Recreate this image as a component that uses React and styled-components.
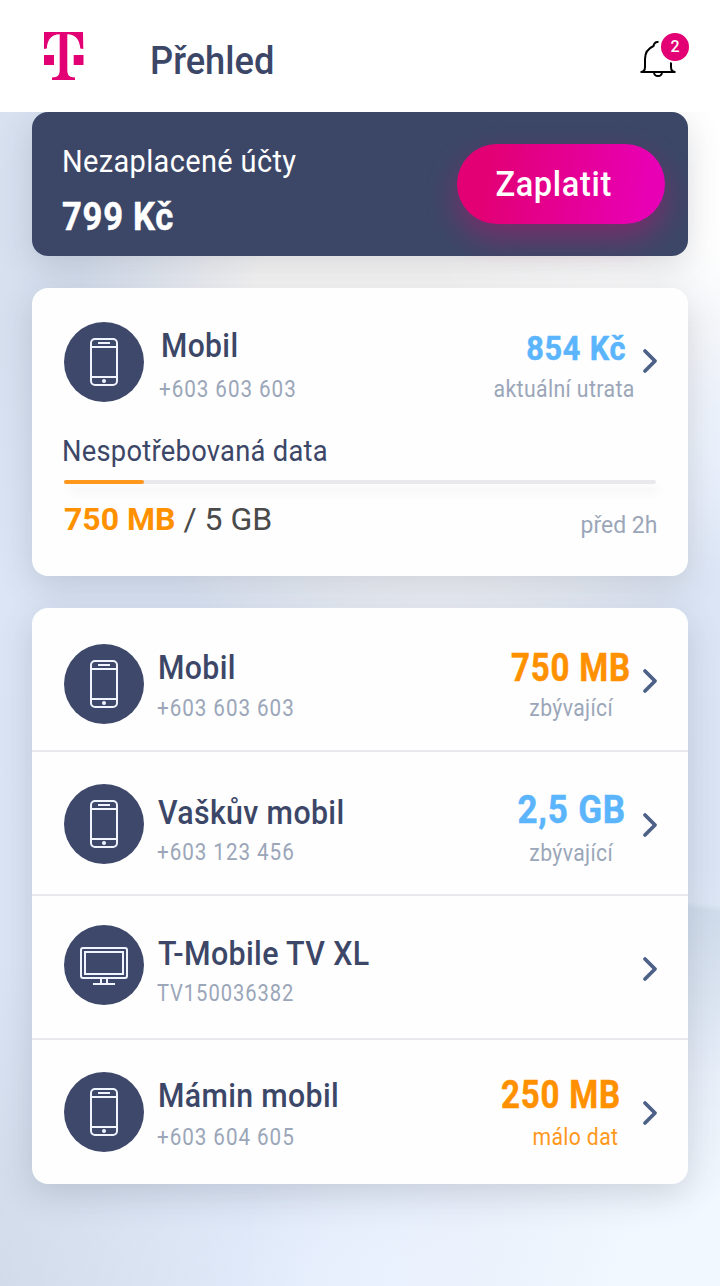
import React from "react";
import styled, { createGlobalStyle } from "styled-components";

const lines = [
  { id: 1, icon: "phone", name: "Mobil", nameFit: 0.89, detail: "+603 603 603", detailFit: 0.86, value: "750 MB", valueFit: 0.87, note: "zbývající", noteFit: 0.92, color: "#ff9100", top: 36, text: 39, gap: 2, side: 39, right: 0, noteRight: 18, sideGap: 7 },
  { id: 2, icon: "phone", name: "Vaškův mobil", nameFit: 0.892, detail: "+603 123 456", detailFit: 0.86, value: "2,5 GB", valueFit: 0.92, note: "zbývající", noteFit: 0.92, color: "#5bb5fd", top: 32, text: 40, gap: 1, side: 37, right: 5, noteRight: 18, sideGap: 10 },
  { id: 3, icon: "tv", name: "T-Mobile TV XL", nameFit: 0.895, detail: "TV150036382", detailFit: 0.84, top: 29, text: 37, gap: 1 },
  { id: 4, icon: "phone", name: "Mámin mobil", nameFit: 0.89, detail: "+603 604 605", detailFit: 0.86, value: "250 MB", valueFit: 0.87, note: "málo dat", noteFit: 0.92, color: "#ff9100", noteColor: "#ff981c", top: 32, text: 35, gap: 3, side: 34, right: 10, noteRight: 13, sideGap: 9 },
];

const PhoneIcon = () => (
  <svg width="28" height="48" viewBox="0 0 28 48" fill="none" stroke="#f0f4ff" strokeWidth="2">
    <rect x="1" y="1" width="26" height="46" rx="4" />
    <path d="M1 9H27M1 39H27M8 5H20" />
    <circle cx="14" cy="43" r="2" fill="#f0f4ff" stroke="none" />
  </svg>
);

const TvIcon = () => (
  <svg width="48" height="40" viewBox="0 -2 48 40" fill="none" stroke="#f0f4ff" strokeWidth="2">
    <rect x="1" y="1" width="46" height="30" rx="2" />
    <rect x="5" y="5" width="38" height="22" />
    <path d="M21 31V37M27 31V37M13 37H35" />
  </svg>
);

const Chevron = () => (
  <svg width="16" height="26" viewBox="0 0 16 26" fill="none" stroke="#4d6188" strokeWidth="3.8" strokeLinecap="round" strokeLinejoin="round">
    <path d="M3 3L13 13L3 23" />
  </svg>
);

const Logo = () => (
  <svg width="40" height="48" viewBox="0 0 40 48" fill="#e20074">
    <path d="M0 0H39L39.3 17L36.3 16.5C35.6 7.5 31.5 2.4 23.3 2.2V38C23.3 43.2 25.3 45.4 31 45.4V48H8V45.4C13.7 45.4 15.7 43.2 15.7 38V2.2C7.5 2.4 3.4 7.5 2.8 16.5L0 17Z" />
    <path d="M0 23H10V33H0ZM29.7 23H39.5V33H29.7Z" />
  </svg>
);

const Bell = () => (
  <svg width="36" height="38" viewBox="0 0 36 38" fill="none" stroke="#000" strokeWidth="2">
    <path d="M18.5 2C15.5 1.5 14 3.5 13.5 6C8 8.5 5 13 5 19V27C5 30 4 32 0.5 32H35.5C32 32 31 30 31 27V22" />
    <path d="M14 32.5C14.5 37.3 21.5 37.3 22 32.5" />
  </svg>
);

const App = () => {
  return (
    <Screen>
      <GlobalStyle />
      <Header>
        <Logo />
        <Title>Přehled</Title>
        <BellButton>
          <Bell />
          <Badge>2</Badge>
        </BellButton>
      </Header>
      <Content>
        <BillCard>
          <Bill>
            <BillLabel>Nezaplacené účty</BillLabel>
            <BillAmount>799 Kč</BillAmount>
          </Bill>
          <PayButton>
            <Fit $fit={0.93}>Zaplatit</Fit>
          </PayButton>
        </BillCard>
        <UsageCard>
          <Row $height={134}>
            <Circle $top={34}><PhoneIcon /></Circle>
            <Texts $top={37} $left={15}>
              <Name $fit={0.885} $shift={1.5}>Mobil</Name>
              <Detail $fit={0.86} $gap={5}>+603 603 603</Detail>
            </Texts>
            <Side $top={39}>
              <Value $size={34} $fit={0.9} $right={5} $color="#5bb5fd">854 Kč</Value>
              <Note $fit={0.925} $right={-4} $gap={8}>aktuální utrata</Note>
            </Side>
            <Arrow><Chevron /></Arrow>
          </Row>
          <UsageTitle>Nespotřebovaná data</UsageTitle>
          <Track>
            <Bar style={{ width: 80 }} />
          </Track>
          <UsageFooter>
            <Usage><b>750 MB</b> / 5 GB</Usage>
            <Updated>před 2h</Updated>
          </UsageFooter>
        </UsageCard>
        <ListCard>
          {lines.map((line) => (
            <Row key={line.id} $height={144} $divided>
              <Circle $top={line.top}>
                {line.icon === "tv" ? <TvIcon /> : <PhoneIcon />}
              </Circle>
              <Texts $top={line.text} $left={13}>
                <Name $fit={line.nameFit} $shift={0.5}>{line.name}</Name>
                <Detail $fit={line.detailFit} $gap={line.gap}>{line.detail}</Detail>
              </Texts>
              {line.value && (
                <Side $top={line.side}>
                  <Value $size={38} $fit={line.valueFit} $right={line.right} $color={line.color}>
                    {line.value}
                  </Value>
                  <Note $fit={line.noteFit} $right={line.noteRight} $gap={line.sideGap} $color={line.noteColor}>
                    {line.note}
                  </Note>
                </Side>
              )}
              <Arrow><Chevron /></Arrow>
            </Row>
          ))}
        </ListCard>
      </Content>
    </Screen>
  );
};

export default App;

const GlobalStyle = createGlobalStyle`
  * {
    box-sizing: border-box;
  }
  body {
    margin: 0;
    font-family: Roboto, "Liberation Sans", sans-serif;
  }
`;

const Screen = styled.div`
  width: 720px;
  height: 1286px;
  overflow: hidden;
  background:
    linear-gradient(188deg, rgba(196, 209, 225, 0) 2%, rgba(196, 209, 225, 0.5) 6%, rgba(196, 209, 225, 0) 100%) 680px 902px / 40px 170px no-repeat,
    radial-gradient(ellipse 330px 270px at 720px 140px, #ffffff 40%, rgba(255, 255, 255, 0) 100%),
    radial-gradient(ellipse 360px 420px at 440px 300px, #f9f8f7 50%, rgba(246, 246, 248, 0) 100%),
    radial-gradient(ellipse 110px 160px at 720px 430px, #e4eefe 20%, rgba(228, 238, 254, 0) 100%),
    radial-gradient(ellipse 480px 420px at 720px 1286px, #f2f8ff 20%, rgba(228, 238, 254, 0) 100%),
    radial-gradient(ellipse 420px 300px at 360px 1286px, #e4edfd 10%, rgba(228, 237, 253, 0) 90%),
    linear-gradient(180deg, #d8e2f1 0%, #d6e0ef 25%, #dbe5f5 45%, #dae4f4 75%, #d0dae8 100%);
`;

const Header = styled.div`
  position: relative;
  z-index: 1;
  display: flex;
  width: 100%;
  height: 112px;
  padding: 32px 44px 0;
  background: #ffffff;
`;

const Fit = styled.span`
  display: inline-block;
  letter-spacing: 0.7px;
  white-space: nowrap;
  transform: scaleX(${({ $fit }) => $fit});
`;

const Title = styled.div`
  height: 56px;
  margin-left: 66px;
  font-size: 39px;
  font-weight: 500;
  line-height: 58px;
  color: #3c4768;
  transform: scaleX(0.93);
  transform-origin: left;
`;

const BellButton = styled.div`
  position: relative;
  width: 36px;
  height: 38px;
  margin-top: 8px;
  margin-left: auto;
`;

const Badge = styled.div`
  position: absolute;
  top: -9px;
  left: 19px;
  width: 32px;
  height: 32px;
  border: 2px solid #ffffff;
  border-radius: 50%;
  background: #e20074;
  color: #ffffff;
  font-size: 16px;
  font-weight: 500;
  line-height: 28px;
  text-align: center;
`;

const Content = styled.div`
  display: flex;
  flex-direction: column;
  gap: 32px;
  padding: 0 32px;
`;

const Card = styled.div`
  border-radius: 16px;
  background: #fefefe;
  box-shadow: 0 10px 34px rgba(64, 68, 84, 0.19);
`;

const BillCard = styled(Card)`
  display: flex;
  justify-content: space-between;
  height: 144px;
  padding: 31px 23px 0 30px;
  background: #3c4767;
`;

const Bill = styled.div`
  display: flex;
  flex-direction: column;
  color: #ffffff;
  white-space: nowrap;
`;

const BillLabel = styled.div`
  font-size: 32px;
  letter-spacing: 0.4px;
  line-height: 36px;
  transform: scaleX(0.905);
  transform-origin: left;
`;

const BillAmount = styled.div`
  margin-top: 18px;
  font-size: 38px;
  font-weight: 700;
  letter-spacing: 0.8px;
  line-height: 40px;
  -webkit-text-stroke: 0.5px currentColor;
  transform: scaleX(0.91);
  transform-origin: left;
`;

const PayButton = styled.button`
  width: 208px;
  height: 80px;
  margin-top: 1px;
  padding: 0 14px 0 0;
  border: 0;
  border-radius: 40px;
  background: linear-gradient(100deg, #e20074 15%, #e800b4 90%);
  box-shadow: 0 14px 30px rgba(226, 0, 116, 0.36);
  color: #ffffff;
  font-family: inherit;
  font-size: 35px;
  font-weight: 500;
`;

const UsageCard = styled(Card)`
  height: 288px;
`;

const ListCard = styled(Card)`
  height: 576px;
`;

const Row = styled.div`
  display: flex;
  height: ${({ $height }) => $height}px;
  padding: 0 30px 0 32px;
  border-bottom: ${({ $divided }) => ($divided ? "2px solid #e9e9ed" : "0")};
  &:last-child {
    border-bottom: 0;
  }
`;

const Circle = styled.div`
  display: flex;
  justify-content: center;
  align-items: center;
  flex-shrink: 0;
  width: 80px;
  height: 80px;
  margin-top: ${({ $top }) => $top}px;
  border-radius: 50%;
  background: #3d486a;
`;

const Texts = styled.div`
  display: flex;
  flex-direction: column;
  align-items: flex-start;
  margin-top: ${({ $top }) => $top}px;
  margin-left: ${({ $left }) => $left}px;
  white-space: nowrap;
`;

const Name = styled.div`
  margin-left: ${({ $shift = 0 }) => $shift}px;
  font-size: 34px;
  font-weight: 500;
  letter-spacing: 0.4px;
  line-height: 40px;
  color: #3c4768;
  transform: scaleX(${({ $fit }) => $fit});
  transform-origin: left;
`;

const Detail = styled.div`
  margin-top: ${({ $gap }) => $gap}px;
  font-size: 24px;
  letter-spacing: 1.1px;
  line-height: 38px;
  color: #9ba6b9;
  transform: scaleX(${({ $fit }) => $fit});
  transform-origin: left;
`;

const Side = styled.div`
  display: flex;
  flex-direction: column;
  align-items: flex-end;
  margin-top: ${({ $top }) => $top}px;
  margin-left: auto;
  padding-right: 11px;
  white-space: nowrap;
`;

const Value = styled.div`
  margin-right: ${({ $right }) => $right}px;
  font-size: ${({ $size }) => $size}px;
  font-weight: 700;
  letter-spacing: 0.9px;
  line-height: 42px;
  color: ${({ $color }) => $color};
  -webkit-text-stroke: 0.5px currentColor;
  transform: scaleX(${({ $fit }) => $fit});
  transform-origin: right;
`;

const Note = styled.div`
  margin-top: ${({ $gap }) => $gap - 4}px;
  margin-right: ${({ $right }) => $right}px;
  font-size: 23px;
  letter-spacing: 0.4px;
  line-height: 34px;
  color: ${({ $color = "#9ba6b9" }) => $color};
  transform: scaleX(${({ $fit }) => $fit});
  transform-origin: right;
`;

const Arrow = styled.div`
  width: 16px;
  margin-top: 60px;
  ${Texts} + & {
    margin-left: auto;
  }
`;

const UsageTitle = styled.div`
  height: 36px;
  margin: 11px 0 11px 30px;
  font-size: 30px;
  letter-spacing: 0.3px;
  line-height: 36px;
  color: #3c4768;
  white-space: nowrap;
  transform: scaleX(0.91);
  transform-origin: left;
`;

const Track = styled.div`
  height: 4px;
  margin: 0 32px;
  border-radius: 2px;
  background: #e9e9eb;
  box-shadow: 4px 8px 8px rgba(60, 71, 104, 0.07);
`;

const Bar = styled.div`
  height: 4px;
  border-radius: 2px;
  background: #ff981c;
`;

const UsageFooter = styled.div`
  display: flex;
  justify-content: space-between;
  padding: 15px 31px 0 32px;
`;

const Usage = styled.div`
  font-size: 32px;
  line-height: 40px;
  color: #4a4a4a;
  b {
    font-weight: 700;
    color: #ff9100;
  }
`;

const Updated = styled.div`
  margin-top: 6px;
  font-size: 24px;
  line-height: 40px;
  color: #9ba6b9;
  transform: scaleX(0.955);
  transform-origin: right;
`;
